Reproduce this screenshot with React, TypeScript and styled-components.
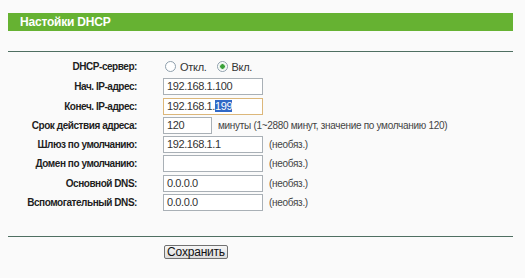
import React from 'react';
import styled, { createGlobalStyle } from 'styled-components';

const Global = createGlobalStyle`
  html, body { margin: 0; padding: 0; background: #fafafa; }
  body { font-family: "Liberation Sans", Arial, sans-serif; }
`

const Page = styled.div`
  padding: 13px 12px 0 8px;
  width: 505px;
`

const TitleBar = styled.div`
  height: 18px;
  background: #66b232;
  color: #fff;
  font: bold 12px/18px "Liberation Sans", Arial, sans-serif;
  letter-spacing: -0.2px;
  padding-left: 12px;
`

const Rule = styled.div<{ $top: number }>`
  height: 1px;
  background: #4f6f62;
  margin-top: ${p => p.$top}px;
`

const Form = styled.div`
  display: grid;
  grid-template-columns: 129px 1fr;
  column-gap: 26px;
  row-gap: 2.3px;
  padding-top: 5px;
`

const Label = styled.div`
  font: bold 10px "Liberation Sans", Arial, sans-serif;
  letter-spacing: -0.45px;
  color: #1e1e1e;
  text-align: right;
  white-space: nowrap;
  align-self: center;
`

const Cell = styled.div`
  display: flex;
  align-items: center;
  gap: 6px;
  min-height: 17px;
`

const Field = styled.div<{ $w: number; $focus?: boolean }>`
  box-sizing: border-box;
  width: ${p => p.$w}px;
  height: 17px;
  background: #fff;
  border: 1px solid ${p => (p.$focus ? '#dcb77a' : '#a9b0b6')};
  font: 11px/15px "Liberation Sans", Arial, sans-serif;
  letter-spacing: -0.4px;
  color: #333;
  padding-left: 3px;
  white-space: nowrap;
`

const Selected = styled.span`
  background: #3169c6;
  color: #fff;
`

const Note = styled.span`
  font: 10px "Liberation Sans", Arial, sans-serif;
  letter-spacing: -0.3px;
  color: #444;
  white-space: nowrap;
`

const Radio = styled.span<{ $on?: boolean }>`
  box-sizing: border-box;
  width: 11px;
  height: 11px;
  border-radius: 50%;
  border: 1px solid #8fa0ad;
  background: radial-gradient(circle, ${p => (p.$on ? '#3aa03a 0 2px, #d6ecd6 2.5px' : '#fff 0')}, #fff 4px);
  margin-left: 2px;
`

const RadioText = styled.span`
  font: 11px "Liberation Sans", Arial, sans-serif;
  letter-spacing: -0.3px;
  color: #333;
  margin-right: 2px;
  margin-left: -2px;
`

const Actions = styled.div`
  display: flex;
  padding: 8px 0 0 156px;
`

const Button = styled.button`
  height: 14px;
  width: 64px;
  padding: 0;
  border: 1px solid #707070;
  border-radius: 2px;
  background: linear-gradient(#f6f6f6, #dcdcdc);
  font: 12px/12px "Liberation Sans", Arial, sans-serif;
  letter-spacing: -0.2px;
  color: #111;
`

const rows: { label: string; value: string; note?: string }[] = [
  { label: 'Шлюз по умолчанию:', value: '192.168.1.1', note: '(необяз.)' },
  { label: 'Домен по умолчанию:', value: '', note: '(необяз.)' },
  { label: 'Основной DNS:', value: '0.0.0.0', note: '(необяз.)' },
  { label: 'Вспомогательный DNS:', value: '0.0.0.0', note: '(необяз.)' },
]

export default function App() {
  return (
    <>
      <Global />
      <Page>
        <TitleBar>Настойки DHCP</TitleBar>
        <Rule $top={20} />
        <Form>
          <Label>DHCP-сервер:</Label>
          <Cell style={{ minHeight: 19 }}>
            <Radio />
            <RadioText>Откл.</RadioText>
            <Radio $on />
            <RadioText>Вкл.</RadioText>
          </Cell>
          <Label>Нач. IP-адрес:</Label>
          <Cell>
            <Field $w={100}>192.168.1.100</Field>
          </Cell>
          <Label>Конеч. IP-адрес:</Label>
          <Cell>
            <Field $w={100} $focus>
              192.168.1.<Selected>199</Selected>
            </Field>
          </Cell>
          <Label>Срок действия адреса:</Label>
          <Cell>
            <Field $w={49}>120</Field>
            <Note>минуты (1~2880 минут, значение по умолчанию 120)</Note>
          </Cell>
          {rows.map(r => (
            <React.Fragment key={r.label}>
              <Label>{r.label}</Label>
              <Cell>
                <Field $w={100}>{r.value}</Field>
                <Note>{r.note}</Note>
              </Cell>
            </React.Fragment>
          ))}
        </Form>
        <Rule $top={25} />
        <Actions>
          <Button>Сохранить</Button>
        </Actions>
      </Page>
    </>
  )
}
